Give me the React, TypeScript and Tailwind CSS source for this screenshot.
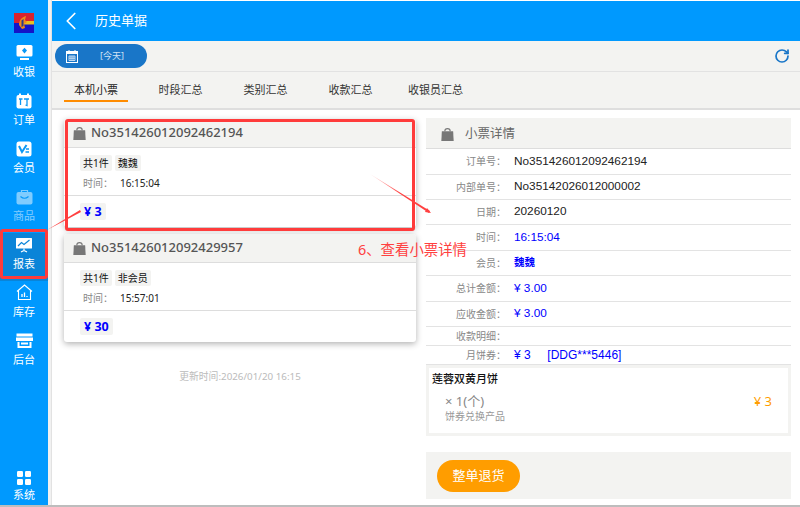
import { ChevronLeft, RotateCw } from "lucide-react"

const Logo = () => (
    <svg width="20" height="20" viewBox="0 0 20 20">
        <rect width="20" height="10" fill="#d9232e" />
        <rect y="10" width="20" height="10" fill="#1414c8" />
        <rect x="10" y="8" width="10" height="3.5" fill="#e8c020" />
        <path d="M5 12 C5 7 8 4 12 3 L11 7 L13 9 L10 11 L11 15 L8 16 Z" fill="#f08a1a" />
        <path d="M7.5 7.5 L9.5 6 L9.5 13 L7.5 14 Z" fill="#2a3a8a" />
    </svg>
)

const IconCash = () => (
    <svg width="17" height="17" viewBox="0 0 17 17">
        <rect x="0.5" y="1" width="16" height="11.5" rx="1.5" fill="#fff" />
        <path d="M8.5 3.8 L11 6.6 L8.5 9.4 L6 6.6 Z" fill="#0a98f5" />
        <rect x="4" y="14" width="9" height="2" fill="#fff" />
    </svg>
)

const IconOrder = () => (
    <svg width="16" height="16" viewBox="0 0 16 16">
        <rect x="0.5" y="2" width="15" height="13.5" rx="2" fill="#fff" />
        <rect x="3" y="0.5" width="2" height="3" fill="#fff" />
        <rect x="11" y="0.5" width="2" height="3" fill="#fff" />
        <path d="M3 6 H6.5 M4.5 6 V12 M8 6 H13 M11 6 V12.5 L9.5 12" stroke="#0a98f5" strokeWidth="1.3" fill="none" />
    </svg>
)

const IconMember = () => (
    <svg width="16" height="16" viewBox="0 0 16 16">
        <rect x="0.5" y="0.5" width="15" height="15" rx="2.5" fill="#fff" />
        <path d="M3 5 L6 11 L10.5 4" stroke="#0a98f5" strokeWidth="2" fill="none" />
        <path d="M10 8 H13 M9.5 11 H13" stroke="#0a98f5" strokeWidth="1.4" fill="none" />
    </svg>
)

const IconGoods = () => (
    <svg width="17" height="16" viewBox="0 0 17 16">
        <path d="M5.5 3 V1.5 H11.5 V3" stroke="#fff" strokeWidth="1.2" fill="none" />
        <rect x="0.5" y="3" width="16" height="12.5" rx="2" fill="#fff" />
        <path d="M4.5 7.5 Q8.5 11 12.5 7.5" stroke="#0a98f5" strokeWidth="1.2" fill="none" />
    </svg>
)

const IconReport = () => (
    <svg width="16" height="16" viewBox="0 0 16 16">
        <rect x="0" y="1" width="16" height="10.5" rx="0.5" fill="#fff" />
        <path d="M2 9 L5.5 5.5 L8 7.5 L13.5 3" stroke="#0a84d8" strokeWidth="1.2" fill="none" />
        <path d="M8 11.5 V14 M5 15 L8 13.5 L11 15" stroke="#fff" strokeWidth="1.2" fill="none" />
    </svg>
)

const IconStock = () => (
    <svg width="17" height="17" viewBox="0 0 17 17">
        <path d="M1 7.5 L8.5 1 L16 7.5 M2.5 6.5 V15.5 H14.5 V6.5" stroke="#fff" strokeWidth="1.1" fill="none" />
        <path d="M6 10 V13 M8.5 8.5 V13 M11 12 V13" stroke="#fff" strokeWidth="1.3" fill="none" />
    </svg>
)

const IconBack = () => (
    <svg width="17" height="15" viewBox="0 0 17 15">
        <rect x="0.5" y="0.5" width="16" height="3" fill="#fff" />
        <rect x="0" y="4.5" width="17" height="3.5" fill="#fff" />
        <path d="M1.5 9 V15 H15.5 V9 H13.5 V13 H3.5 V9 Z" fill="#fff" />
        <rect x="5" y="9.5" width="7" height="2" fill="#fff" />
    </svg>
)

const IconSystem = () => (
    <svg width="14" height="14" viewBox="0 0 14 14">
        <rect width="6" height="6" rx="1.2" fill="#fff" />
        <rect x="8" width="6" height="6" rx="1.2" fill="#fff" />
        <rect y="8" width="6" height="6" rx="1.2" fill="#fff" />
        <rect x="8" y="8" width="6" height="6" rx="1.2" fill="#fff" />
    </svg>
)

const IconBag = () => (
    <svg width="13" height="13" viewBox="0 0 12 12">
        <path d="M3.5 3 C3.5 -0.2 8.5 -0.2 8.5 3" stroke="#777" strokeWidth="1" fill="none" />
        <path d="M0.8 3 H11.2 L11.7 12 H0.3 Z" fill="#777" />
    </svg>
)

const IconCalendar = () => (
    <svg width="12" height="13" viewBox="0 0 12 13">
        <rect x="0.5" y="1.5" width="11" height="11" fill="none" stroke="#fff" strokeWidth="1" />
        <rect x="0.5" y="1.5" width="11" height="2.5" fill="#fff" />
        <rect x="2.5" y="0" width="1" height="2" fill="#fff" />
        <rect x="8.5" y="0" width="1" height="2" fill="#fff" />
        <path d="M3 6 H9 V10.5 H3 Z M5 6 V10.5 M7 6 V10.5 M3 8.2 H9" stroke="#fff" strokeWidth="0.7" fill="none" />
    </svg>
)

const navItems = [
    { label: "收银", icon: <IconCash />, dim: false, active: false },
    { label: "订单", icon: <IconOrder />, dim: false, active: false },
    { label: "会员", icon: <IconMember />, dim: false, active: false },
    { label: "商品", icon: <IconGoods />, dim: true, active: false },
    { label: "报表", icon: <IconReport />, dim: false, active: true },
    { label: "库存", icon: <IconStock />, dim: false, active: false },
    { label: "后台", icon: <IconBack />, dim: false, active: false },
]

const tabs = ["本机小票", "时段汇总", "类别汇总", "收款汇总", "收银员汇总"]

const tickets = [
    { no: "No351426012092462194", member: "魏魏", time: "16:15:04", amount: "3" },
    { no: "No351426012092429957", member: "非会员", time: "15:57:01", amount: "30" },
]

const Ticket = ({ no, member, time, amount }: { no: string; member: string; time: string; amount: string }) => (
    <div className="bg-white rounded-[3px] shadow-[0_2px_6px_rgba(0,0,0,0.3)]">
        <div className="h-[29px] bg-[#f3f3f1] border-b border-[#dddddd] flex items-center pl-[9px] gap-[5px] rounded-t-[3px]">
            <IconBag />
            <span className="text-[13px] font-medium text-[#555555]">{no}</span>
        </div>
        <div className="h-[48px] border-b border-[#dddddd] pl-4 pt-[7px]">
            <div className="flex gap-[3px]">
                <span className="h-[16px] px-[3px] bg-[#f3f3f1] rounded-[2px] text-[10px] leading-[16px] text-[#111111]">共1件</span>
                <span className="h-[16px] px-[3px] bg-[#f3f3f1] rounded-[2px] text-[10px] leading-[16px] text-[#111111]">{member}</span>
            </div>
            <div className="flex items-center mt-[4px] pl-[3px] text-[10px] h-[16px]">
                <span className="w-[37px] text-[#888888]">时间：</span>
                <span className="text-[#222222]">{time}</span>
            </div>
        </div>
        <div className="h-[31px] pl-4 flex items-center">
            <span className="h-[17px] px-[4px] bg-[#f3f3f1] rounded-[2px] text-[12.5px] leading-[17px] font-bold text-[#0000ff]">¥ {amount}</span>
        </div>
    </div>
)

const valueFont = "font-['Liberation_Sans','Noto_Sans_CJK_SC',sans-serif]"

const detailRows = [
    { label: "订单号：", value: "No351426012092462194", cls: "text-[11.8px] text-[#222222]", h: "h-[26px]" },
    { label: "内部单号：", value: "No35142026012000002", cls: "text-[11.8px] text-[#222222]", h: "h-[25px]" },
    { label: "日期：", value: "20260120", cls: "text-[11.8px] text-[#222222]", h: "h-[25px]" },
    { label: "时间：", value: "16:15:04", cls: "text-[11.8px] text-[#0000ff]", h: "h-[26px]" },
    { label: "会员：", value: "魏魏", cls: "text-[10.5px] font-bold text-[#0000ff]", h: "h-[25px]" },
    { label: "总计金额：", value: "¥ 3.00", cls: "text-[11.8px] text-[#0000ff]", h: "h-[26px]" },
    { label: "应收金额：", value: "¥ 3.00", cls: "text-[11.8px] text-[#0000ff]", h: "h-[25px]" },
    { label: "收款明细：", value: "", cls: "", h: "h-[19px]" },
    { label: "月饼券：", value: "¥ 3\u00a0\u00a0\u00a0\u00a0\u00a0[DDG***5446]", cls: "text-[12px] text-[#0000ff]", h: "h-[19px]" },
]

const App = () => {
    return (
        <div
            className="relative w-[800px] h-[507px] overflow-hidden bg-white flex flex-col"
            style={{ fontFamily: '"Noto Sans", "Noto Sans CJK SC", sans-serif' }}
        >
            <div className="flex flex-1 min-h-0">
                <aside className="w-[48px] shrink-0 bg-[#0099fe] flex flex-col items-center text-white">
                    <div className="h-[41px] pt-[13px]">
                        <Logo />
                    </div>
                    {navItems.map((item) => (
                        <div
                            key={item.label}
                            className={`w-full h-[48px] flex flex-col items-center pt-[3px] gap-[3px] ${item.active ? "bg-[#0a84d8]" : ""} ${item.dim ? "opacity-50" : ""}`}
                        >
                            <div className="h-[17px] flex items-center">{item.icon}</div>
                            <span className="text-[11px] leading-[16px]">{item.label}</span>
                        </div>
                    ))}
                    <div className="mt-auto flex flex-col items-center gap-[2px] pb-[2px]">
                        <IconSystem />
                        <span className="text-[11px] leading-[16px]">系统</span>
                    </div>
                </aside>
                <div className="w-[4px] shrink-0 bg-[#f1f1f1] border-r border-[#e2e2e2]"></div>

                <main className="flex-1 min-w-0 flex flex-col">
                    <header className="h-[40px] mt-px shrink-0 bg-[#0099fe] flex items-center pl-[4px] text-white">
                        <ChevronLeft size={30} strokeWidth={1.4} />
                        <span className="ml-[9px] text-[13px]">历史单据</span>
                    </header>
                    <div className="h-[31px] shrink-0 bg-[#f3f3f1] border-b border-[#e2e2e2] flex items-center justify-between pl-[3px] pr-[10px]">
                        <div className="w-[92px] h-[24px] rounded-full bg-[#1976c8] flex items-center pl-[11px]">
                            <IconCalendar />
                            <span className="ml-[22px] text-[9px] text-[#cfe3f5]">[今天]</span>
                        </div>
                        <RotateCw size={16} strokeWidth={2.6} className="text-[#1976c8]" />
                    </div>
                    <nav className="h-[38px] shrink-0 bg-[#f3f3f1] border-b-2 border-[#dedede] flex pl-[12px]">
                        {tabs.map((tab, i) => (
                            <div key={tab} className="w-[85px] first:w-[64px] first:mr-[10px] flex flex-col items-center">
                                <span className={`mt-[10px] text-[11px] leading-[16px] ${i === 0 ? "text-[#222222]" : "text-[#333333]"}`}>{tab}</span>
                                {i === 0 && <div className="w-full h-[2px] mt-[2px] bg-[#ff8c00]"></div>}
                            </div>
                        ))}
                    </nav>

                    <div className="flex-1 min-h-0 flex">
                        <section className="w-[374px] shrink-0 pl-[12px] pr-[10px] pt-[9px] flex flex-col gap-[7px]">
                            {tickets.map((t) => (
                                <Ticket key={t.no} {...t} />
                            ))}
                            <p className="mt-[21px] text-center text-[9.8px] text-[#bbbbbb]">更新时间:2026/01/20 16:15</p>
                        </section>

                        <section className="w-[365px] shrink-0 pt-[8px] flex flex-col">
                            <div className="h-[31px] pt-[2px] bg-[#f3f3f1] border-b border-[#dddddd] flex items-center pl-[15px]">
                                <IconBag />
                                <span className="ml-[11px] text-[12.5px] text-[#666666]">小票详情</span>
                            </div>
                            {detailRows.map((r) => (
                                <div key={r.label} className={`${r.h} border-b border-[#e3e3e3] flex items-center`}>
                                    <span className="w-[80px] text-right text-[10px] text-[#888888]">{r.label}</span>
                                    <span className={`ml-[8px] ${valueFont} ${r.cls}`}>{r.value}</span>
                                </div>
                            ))}
                            <div className="h-[71px] bg-[#f3f3f1] p-[3px]">
                                <div className="h-full bg-white pl-[3px] pr-[16px] pt-[3px] flex flex-col">
                                    <span className="text-[11px] leading-[16px] font-medium text-[#111111]">莲蓉双黄月饼</span>
                                    <div className="flex justify-between pl-[13px] mt-[6px]">
                                        <span className="text-[13px] leading-[16px] text-[#888888]">× 1(个)</span>
                                        <span className="text-[13px] leading-[16px] text-[#ff9d00]">¥ 3</span>
                                    </div>
                                    <span className="ml-[13px] text-[10px] leading-[15px] text-[#999999]">饼券兑换产品</span>
                                </div>
                            </div>
                            <div className="mt-[16px] h-[47px] bg-[#f3f3f1] flex items-center pl-[11px]">
                                <button className="w-[83px] h-[32px] rounded-full bg-[#ff9d00] text-white text-[13px]">整单退货</button>
                            </div>
                        </section>
                    </div>
                </main>
            </div>
            <div className="h-[2px] shrink-0 bg-[#bdbdbd]"></div>

            {/* annotations on top of the screenshot */}
            <div className="absolute left-[65px] top-[119px] w-[350px] h-[112px] border-[3px] border-[#ff3b3b] rounded-[3px]"></div>
            <div className="absolute left-0 top-[229px] w-[48px] h-[50px] border-[3px] border-[#ff3b3b] rounded-[3px]"></div>
            <svg className="absolute left-0 top-0 pointer-events-none" width="800" height="507">
                <defs>
                    <linearGradient id="fade" gradientUnits="userSpaceOnUse" x1="370" y1="174" x2="400" y2="193">
                        <stop offset="0" stopColor="#ff4040" stopOpacity="0.2" />
                        <stop offset="1" stopColor="#ff4040" />
                    </linearGradient>
                </defs>
                <path d="M47 230 L80 210 L81 212 Z" fill="#ff4040" />
                <path d="M370 174 L430 211 L429 213 Z" fill="url(#fade)" />
                <path d="M431 213 L425 212 L427 208 Z" fill="#ff4040" />
            </svg>
            <span className="absolute left-[358px] top-[240px] text-[14.4px] leading-[20px] text-[#ff4040]">6、查看小票详情</span>
        </div>
    )
}

export default App
